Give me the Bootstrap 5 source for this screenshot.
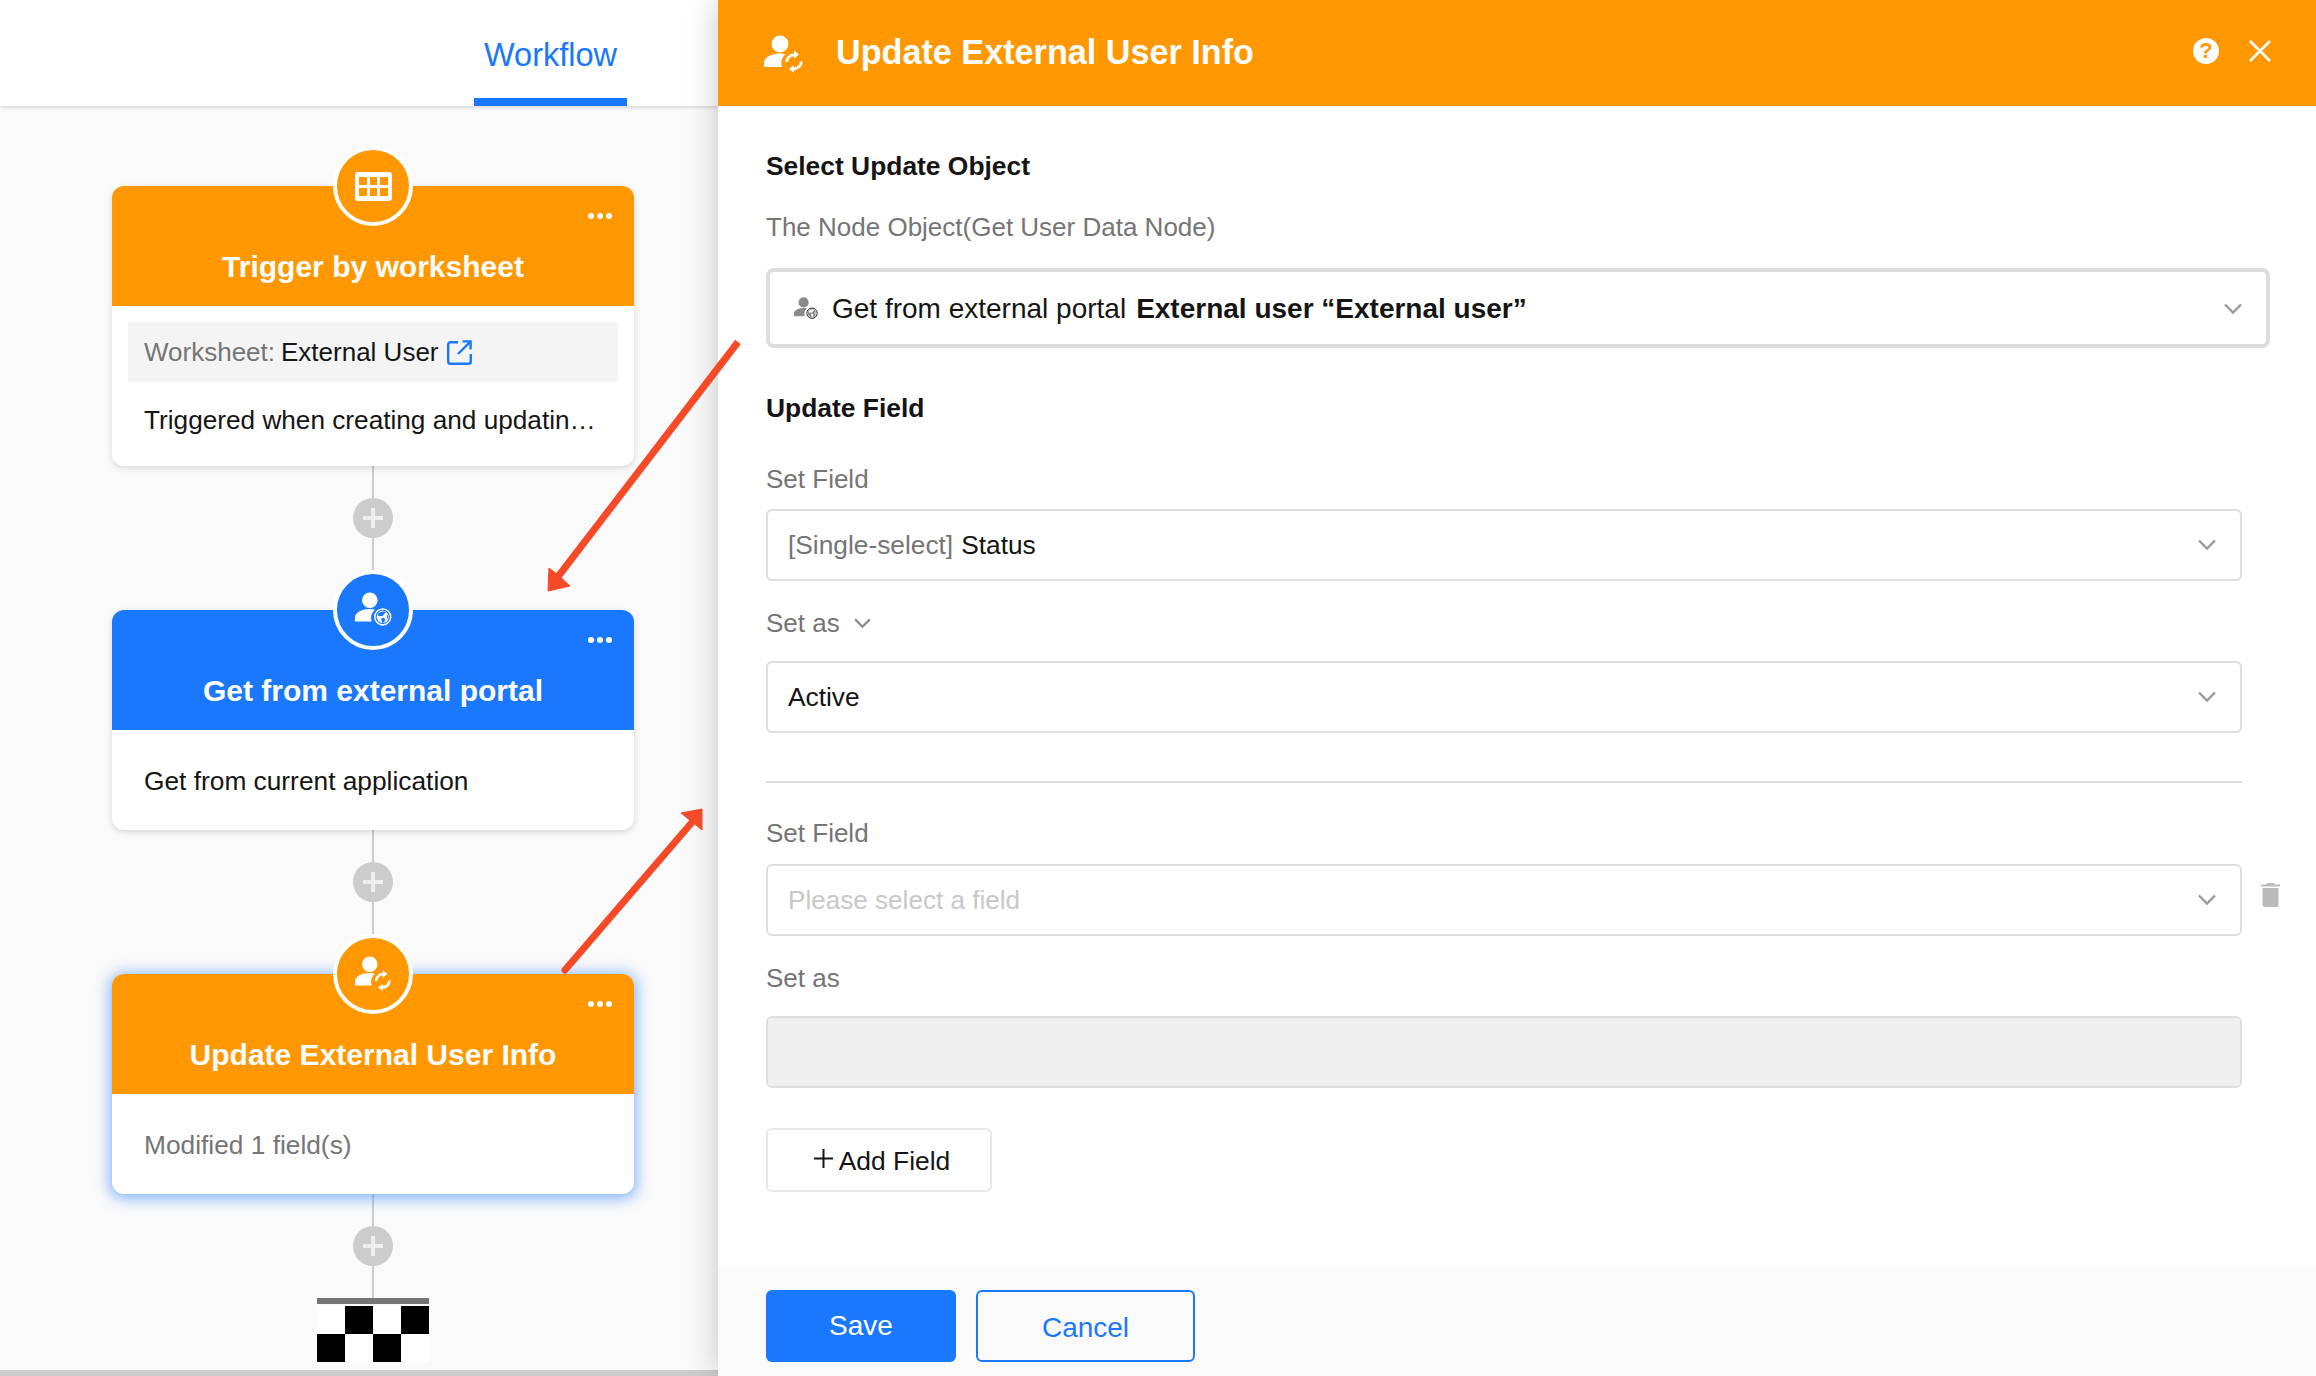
<!DOCTYPE html>
<html lang="en">
<head>
    <meta charset="UTF-8">
    <meta name="viewport" content="width=device-width, initial-scale=1.0">
    <title>Update External User Info</title>
    <link href="https://cdn.jsdelivr.net/npm/bootstrap@5.3.3/dist/css/bootstrap.min.css" rel="stylesheet">

    <style>
        :root {
            --wf-blue: #1a78ff;
            --wf-orange: #ff9800;
            --wf-grey: #757575;
            --wf-dark: #151515;
        }

        html, body { height: 100%; }

        body {
            font-family: "Liberation Sans", Arial, sans-serif;
            font-size: 26px;
            line-height: 36px;
            color: var(--wf-dark);
            background-color: #fafafa;
            overflow: hidden;
        }

        .page-wrap { height: 1376px; }

        /* Left side: flow chart */
        .left-side { width: 718px; flex: none; }

        .top-bar {
            height: 106px;
            padding-left: 474px;
            background-color: #fff;
            box-shadow: 0 1px 4px rgba(0, 0, 0, .18);
        }

        .top-bar .nav-link {
            height: 106px;
            width: 153px;
            padding: 37px 0 0;
            font-size: 32.5px;
            text-align: center;
            color: var(--wf-blue);
            border-bottom: 8px solid var(--wf-blue);
        }

        .flow-canvas { padding: 80px 0 0 28px; }

        .wf-node {
            --bs-card-border-width: 0;
            --bs-card-border-radius: 12px;
            --bs-card-inner-border-radius: 12px;
            width: 522px;
            background-color: #fff;
            box-shadow: 0 2px 6px rgba(0, 0, 0, .14);
        }

        .wf-node.is-active { box-shadow: 0 2px 14px 3px rgba(26, 120, 255, .5); }

        .wf-node .card-header {
            height: 120px;
            padding: 60px 0 0;
            border: 0;
            color: #fff;
            font-size: 30px;
            line-height: 42px;
            font-weight: 700;
            text-align: center;
        }

        .head-orange { background-color: var(--wf-orange); --ic-bg: var(--wf-orange); }
        .head-blue { background-color: var(--wf-blue); --ic-bg: var(--wf-blue); }

        .node-circle {
            position: absolute;
            top: -40px;
            left: 221px;
            width: 80px;
            height: 80px;
            border: 4px solid #fff;
            color: #fff;
        }

        .node-dots {
            position: absolute;
            top: 27px;
            right: 22px;
            width: 24px;
            height: 6px;
            color: #fff;
        }

        .node-text { height: 100px; padding: 1px 32px 0; font-size: 26.3px; }
        .ws-row { height: 60px; margin: 16px 16px 0; padding: 0 16px; background-color: #f4f4f4; }
        .ws-name { margin-left: 6px; }
        .ws-link { margin-left: 8px; }
        .trig-text { margin: 20px 32px 28px; font-size: 26.2px; white-space: nowrap; }
        .text-wf-grey { color: var(--wf-grey); }

        .wf-link { width: 2px; background-color: #ccc; }
        .link-32 { height: 32px; }
        .link-72 { height: 72px; }

        .plus-dot {
            width: 40px;
            height: 40px;
            background-color: #ccc;
            color: #eee;
        }

        .flag-top { width: 112px; height: 6px; margin-bottom: 2px; background-color: var(--wf-grey); }
        .flag-grid { display: grid; grid-template-columns: repeat(4, 28px); grid-auto-rows: 28px; }
        .flag-b { background-color: #000; }
        .flag-w { background-color: #fff; }
        .bottom-line { height: 6px; background-color: #ccc; }

        /* Right side: settings panel */
        .side-panel {
            position: relative;
            z-index: 2;
            background-color: #fff;
            box-shadow: 0 0 30px rgba(0, 0, 0, .22);
        }

        .panel-head {
            height: 106px;
            flex: none;
            padding: 0 45px 0 46px;
            background-color: var(--wf-orange);
            color: #fff;
        }

        .panel-icon { margin-top: 4px; }
        .panel-title { margin: 0 0 2px 32px; font-size: 34.2px; font-weight: 700; }

        .help-dot {
            width: 26px;
            height: 26px;
            margin: 0 30px 4px 0;
            background-color: #fff;
            color: var(--wf-orange);
            font-size: 22px;
            line-height: 26px;
            font-weight: 700;
            text-align: center;
        }

        .close-x { margin-bottom: 4px; }

        .panel-body { padding: 42px 0 0 48px; }
        .sec-title { font-weight: 700; font-size: 26.4px; }
        .mb-25 { margin-bottom: 25px; }
        .mb-23 { margin-bottom: 23px; }
        .mb-24 { margin-bottom: 24px; }
        .mb-35 { margin-bottom: 35px; }
        .mb-12 { margin-bottom: 12px; }
        .mb-13 { margin-bottom: 13px; }
        .mb-20 { margin-bottom: 20px; }
        .mb-42 { margin-bottom: 42px; }
        .mb-40 { margin-bottom: 40px; }

        .pick-box {
            height: 72px;
            padding: 0 24px 0 20px;
            border: 2px solid #ddd;
            border-radius: 6px;
            font-size: 26.3px;
            line-height: 36px;
            color: var(--wf-dark);
            background-color: #fff;
        }

        .pick-box.pick-main {
            width: auto;
            height: 80px;
            margin-right: 46px;
            padding: 2px 24px 0;
            border: 4px solid #ddd;
            border-radius: 8px;
            font-size: 28px;
        }

        .pick-main strong { margin-left: 10px; }
        .pick-box.is-off { background-color: #efefef; }
        .pick-hint { color: #c8c8c8; font-size: 26.1px; }
        .pick-chev { flex: none; margin-left: auto; color: #999; }
        .pick-ic { margin-right: 14px; --ic-bg: #fff; }
        .set-chev { margin-left: 14px; color: #8a8a8a; }
        .field-wrap { margin-right: 74px; }
        .trash-slot { width: 74px; flex: none; padding: 19px 0 0 19px; color: #bbb; }
        .sep-line { height: 2px; margin: 48px 74px 32px 0; background-color: #ddd; }
        .label-off { padding-top: 1px; margin-bottom: 20px; }

        .add-btn {
            width: 226px;
            height: 64px;
            padding: 2px 0 0 6px;
            border: 2px solid #eaeaea;
            border-radius: 6px;
            font-size: 26.4px;
            line-height: 36px;
            color: var(--wf-dark);
            background-color: #fff;
        }

        .add-plus { margin: 0 6px 6px 0; }

        .panel-foot { height: 110px; flex: none; padding: 24px 0 0 48px; background-color: #fafafa; }

        .foot-btn {
            height: 72px;
            padding: 0;
            border-radius: 6px;
            font-size: 28px;
            line-height: 36px;
        }

        .btn-save { width: 190px; margin-right: 20px; border: 0; background-color: var(--wf-blue); color: #fff; }
        .btn-cancel { width: 219px; padding-top: 4px; border: 2px solid var(--wf-blue); background-color: transparent; color: var(--wf-blue); }

        /* The red call-out arrows lie over both sides */
        .call-arrows {
            position: absolute;
            top: 0;
            left: 0;
            z-index: 5;
            pointer-events: none;
        }
    </style>
</head>
<body>

    <svg width="0" height="0" class="position-absolute">
        <defs>
            <g id="ic-person">
                <circle cx="16" cy="9" r="8.4"/>
                <path d="M0 32V28C0 22 8 18.5 16 18.5C18 18.5 20 18.7 21.5 19.2A12 12 0 0 0 18 32Z"/>
            </g>
            <symbol id="ic-sync" viewBox="0 0 40 40">
                <use href="#ic-person"/>
                <g fill="none" stroke="currentColor" stroke-width="2.8">
                    <path d="M22.8 27A7.2 7.2 0 0 1 30.5 19.8"/>
                    <path d="M37.2 26.5A7.2 7.2 0 0 1 29.5 33.8"/>
                </g>
                <path d="M30 15.5V23.5L35 19.5Z"/>
                <path d="M30 30V38L25 34Z"/>
            </symbol>
            <symbol id="ic-globe" viewBox="0 0 40 40">
                <use href="#ic-person"/>
                <circle cx="30" cy="27" r="8.6" fill="none" stroke="currentColor" stroke-width="1.6"/>
                <circle cx="30" cy="27" r="6.6"/>
                <path fill="var(--ic-bg)" d="M25 23.5C27 21.5 31 20.5 33.5 21.5C33 23.5 31 23 30.5 25C29.8 27 27 25.5 25 26ZM29 28C31 27.5 33 28.5 32.5 30.5C32 32 31 33 29.5 33.5C29.5 31.5 27.5 30 29 28ZM34.5 24.5C36 25.5 36.5 27.5 36 29.5C35 28.5 34 26.5 34.5 24.5Z"/>
            </symbol>
            <symbol id="ic-dots" viewBox="0 0 24 6">
                <circle cx="3" cy="3" r="3"/><circle cx="12" cy="3" r="3"/><circle cx="21" cy="3" r="3"/>
            </symbol>
            <symbol id="ic-plus" viewBox="0 0 20 20">
                <rect x="8" y="0" width="4" height="20"/><rect x="0" y="8" width="20" height="4"/>
            </symbol>
            <symbol id="ic-chev" viewBox="0 0 18 12">
                <path d="M1 1.5L9 9.5L17 1.5" fill="none" stroke="currentColor" stroke-width="2.4"/>
            </symbol>
        </defs>
    </svg>

    <div class="page-wrap d-flex position-relative">

        <!-- Flow chart -->
        <div class="left-side d-flex flex-column">
            <div class="top-bar">
                <ul class="nav">
                    <li class="nav-item"><a class="nav-link" href="#">Workflow</a></li>
                </ul>
            </div>

            <div class="flow-canvas flex-grow-1 d-flex flex-column align-items-center">
                <!-- Trigger -->
                <div class="card wf-node">
                    <div class="card-header head-orange">Trigger by worksheet</div>
                    <div class="node-circle rounded-circle head-orange d-flex align-items-center justify-content-center">
                        <svg width="37" height="29" viewBox="0 0 37 29">
                            <path fill="#fff" fill-rule="evenodd" d="M3 0H34A3 3 0 0 1 37 3V26A3 3 0 0 1 34 29H3A3 3 0 0 1 0 26V3A3 3 0 0 1 3 0ZM4 5V13H12V5ZM15 5V13H22V5ZM25 5V13H33V5ZM4 16V24H12V16ZM15 16V24H22V16ZM25 16V24H33V16Z"/>
                        </svg>
                    </div>
                    <svg class="node-dots" fill="currentColor"><use href="#ic-dots"/></svg>
                    <div class="ws-row d-flex align-items-center">
                        <span class="text-wf-grey">Worksheet:</span>
                        <span class="ws-name">External User</span>
                        <svg class="ws-link" width="25" height="25" viewBox="0 0 25 25" fill="none" stroke="#1a78ff" stroke-width="2.4">
                            <path d="M11 2.2H3.5A2.3 2.3 0 0 0 1.2 4.5V21.5A2.3 2.3 0 0 0 3.5 23.8H21.5A2.3 2.3 0 0 0 23.8 21.5V14"/>
                            <path d="M15.5 1.4H23.6V9.5M23.4 1.6L11 14"/>
                        </svg>
                    </div>
                    <div class="trig-text">Triggered when creating and updatin…</div>
                </div>

                <div class="wf-link link-32"></div>
                <div class="plus-dot rounded-circle d-flex align-items-center justify-content-center">
                    <svg width="20" height="20" fill="currentColor"><use href="#ic-plus"/></svg>
                </div>
                <div class="wf-link link-72"></div>

                <!-- Get from portal -->
                <div class="card wf-node">
                    <div class="card-header head-blue">Get from external portal</div>
                    <div class="node-circle rounded-circle head-blue d-flex align-items-center justify-content-center">
                        <svg width="37" height="37" fill="#fff"><use href="#ic-globe"/></svg>
                    </div>
                    <svg class="node-dots" fill="currentColor"><use href="#ic-dots"/></svg>
                    <div class="node-text d-flex align-items-center">Get from current application</div>
                </div>

                <div class="wf-link link-32"></div>
                <div class="plus-dot rounded-circle d-flex align-items-center justify-content-center">
                    <svg width="20" height="20" fill="currentColor"><use href="#ic-plus"/></svg>
                </div>
                <div class="wf-link link-72"></div>

                <!-- Update user -->
                <div class="card wf-node is-active">
                    <div class="card-header head-orange">Update External User Info</div>
                    <div class="node-circle rounded-circle head-orange d-flex align-items-center justify-content-center">
                        <svg width="37" height="37" fill="#fff"><use href="#ic-sync"/></svg>
                    </div>
                    <svg class="node-dots" fill="currentColor"><use href="#ic-dots"/></svg>
                    <div class="node-text d-flex align-items-center text-wf-grey">Modified 1 field(s)</div>
                </div>

                <div class="wf-link link-32"></div>
                <div class="plus-dot rounded-circle d-flex align-items-center justify-content-center">
                    <svg width="20" height="20" fill="currentColor"><use href="#ic-plus"/></svg>
                </div>
                <div class="wf-link link-32"></div>

                <!-- End flag -->
                <div class="flag-top"></div>
                <div class="flag-grid">
                    <div class="flag-w"></div><div class="flag-b"></div><div class="flag-w"></div><div class="flag-b"></div>
                    <div class="flag-b"></div><div class="flag-w"></div><div class="flag-b"></div><div class="flag-w"></div>
                </div>
            </div>

            <div class="bottom-line"></div>
        </div>

        <!-- Settings panel -->
        <div class="side-panel flex-grow-1 d-flex flex-column">
            <div class="panel-head d-flex align-items-center">
                <svg class="panel-icon" width="40" height="40" fill="#fff"><use href="#ic-sync"/></svg>
                <div class="panel-title flex-grow-1">Update External User Info</div>
                <div class="help-dot rounded-circle">?</div>
                <svg class="close-x" width="22" height="22" viewBox="0 0 22 22" fill="none" stroke="#fff" stroke-width="2.6">
                    <path d="M1 1L21 21M21 1L1 21"/>
                </svg>
            </div>

            <div class="panel-body flex-grow-1">
                <div class="sec-title mb-25">Select Update Object</div>
                <div class="text-wf-grey mb-23">The Node Object(Get User Data Node)</div>
                <div class="form-control pick-box pick-main d-flex align-items-center mb-42">
                    <svg class="pick-ic" width="24" height="24" fill="#8a8a8a"><use href="#ic-globe"/></svg>
                    <span>Get from external portal</span>
                    <strong>External user “External user”</strong>
                    <svg class="pick-chev" width="18" height="12"><use href="#ic-chev"/></svg>
                </div>

                <div class="sec-title mb-35">Update Field</div>

                <div class="field-wrap">
                    <div class="text-wf-grey mb-12">Set Field</div>
                    <div class="form-control pick-box d-flex align-items-center mb-24">
                        <span class="text-wf-grey me-2">[Single-select]</span>
                        <span>Status</span>
                        <svg class="pick-chev" width="18" height="12"><use href="#ic-chev"/></svg>
                    </div>
                    <div class="text-wf-grey mb-20 d-flex align-items-center">
                        <span>Set as</span>
                        <svg class="set-chev" width="17" height="11"><use href="#ic-chev"/></svg>
                    </div>
                    <div class="form-control pick-box d-flex align-items-center">
                        <span>Active</span>
                        <svg class="pick-chev" width="18" height="12"><use href="#ic-chev"/></svg>
                    </div>
                </div>

                <div class="sep-line"></div>

                <div class="text-wf-grey field-wrap mb-13">Set Field</div>
                <div class="d-flex mb-23">
                    <div class="form-control pick-box d-flex align-items-center flex-grow-1 w-auto">
                        <span class="pick-hint">Please select a field</span>
                        <svg class="pick-chev" width="18" height="12"><use href="#ic-chev"/></svg>
                    </div>
                    <div class="trash-slot">
                        <svg class="d-block" width="19" height="24" viewBox="0 0 19 24" fill="currentColor">
                            <path d="M6 0H13L14 1.5H19V3.5H0V1.5H5ZM1.5 5H17.5V21.5A2.5 2.5 0 0 1 15 24H4A2.5 2.5 0 0 1 1.5 21.5Z"/>
                        </svg>
                    </div>
                </div>

                <div class="field-wrap">
                    <div class="text-wf-grey label-off">Set as</div>
                    <div class="form-control pick-box is-off mb-40"></div>
                    <button type="button" class="btn add-btn d-flex align-items-center justify-content-center">
                        <svg class="add-plus" width="19" height="19" viewBox="0 0 19 19" fill="#151515"><rect x="8.5" width="2" height="19"/><rect y="8.5" width="19" height="2"/></svg>
                        <span>Add Field</span>
                    </button>
                </div>
            </div>

            <div class="panel-foot d-flex align-items-start">
                <button type="button" class="btn foot-btn btn-save">Save</button>
                <button type="button" class="btn foot-btn btn-cancel">Cancel</button>
            </div>
        </div>

        <!-- Call-out arrows -->
        <svg class="call-arrows" width="2316" height="1376" viewBox="0 0 2316 1376" fill="#f44a27" stroke="#f44a27">
            <path d="M738 342L557 578" stroke-width="7" fill="none"/>
            <path d="M548 591L549 568L558 575L570 586Z" stroke-width="1"/>
            <path d="M565 970L694 820" stroke-width="7" fill="none" stroke-linecap="round"/>
            <path d="M702 809L681 813L691 821L702 830Z" stroke-width="1"/>
        </svg>
    </div>

</body>
</html>
